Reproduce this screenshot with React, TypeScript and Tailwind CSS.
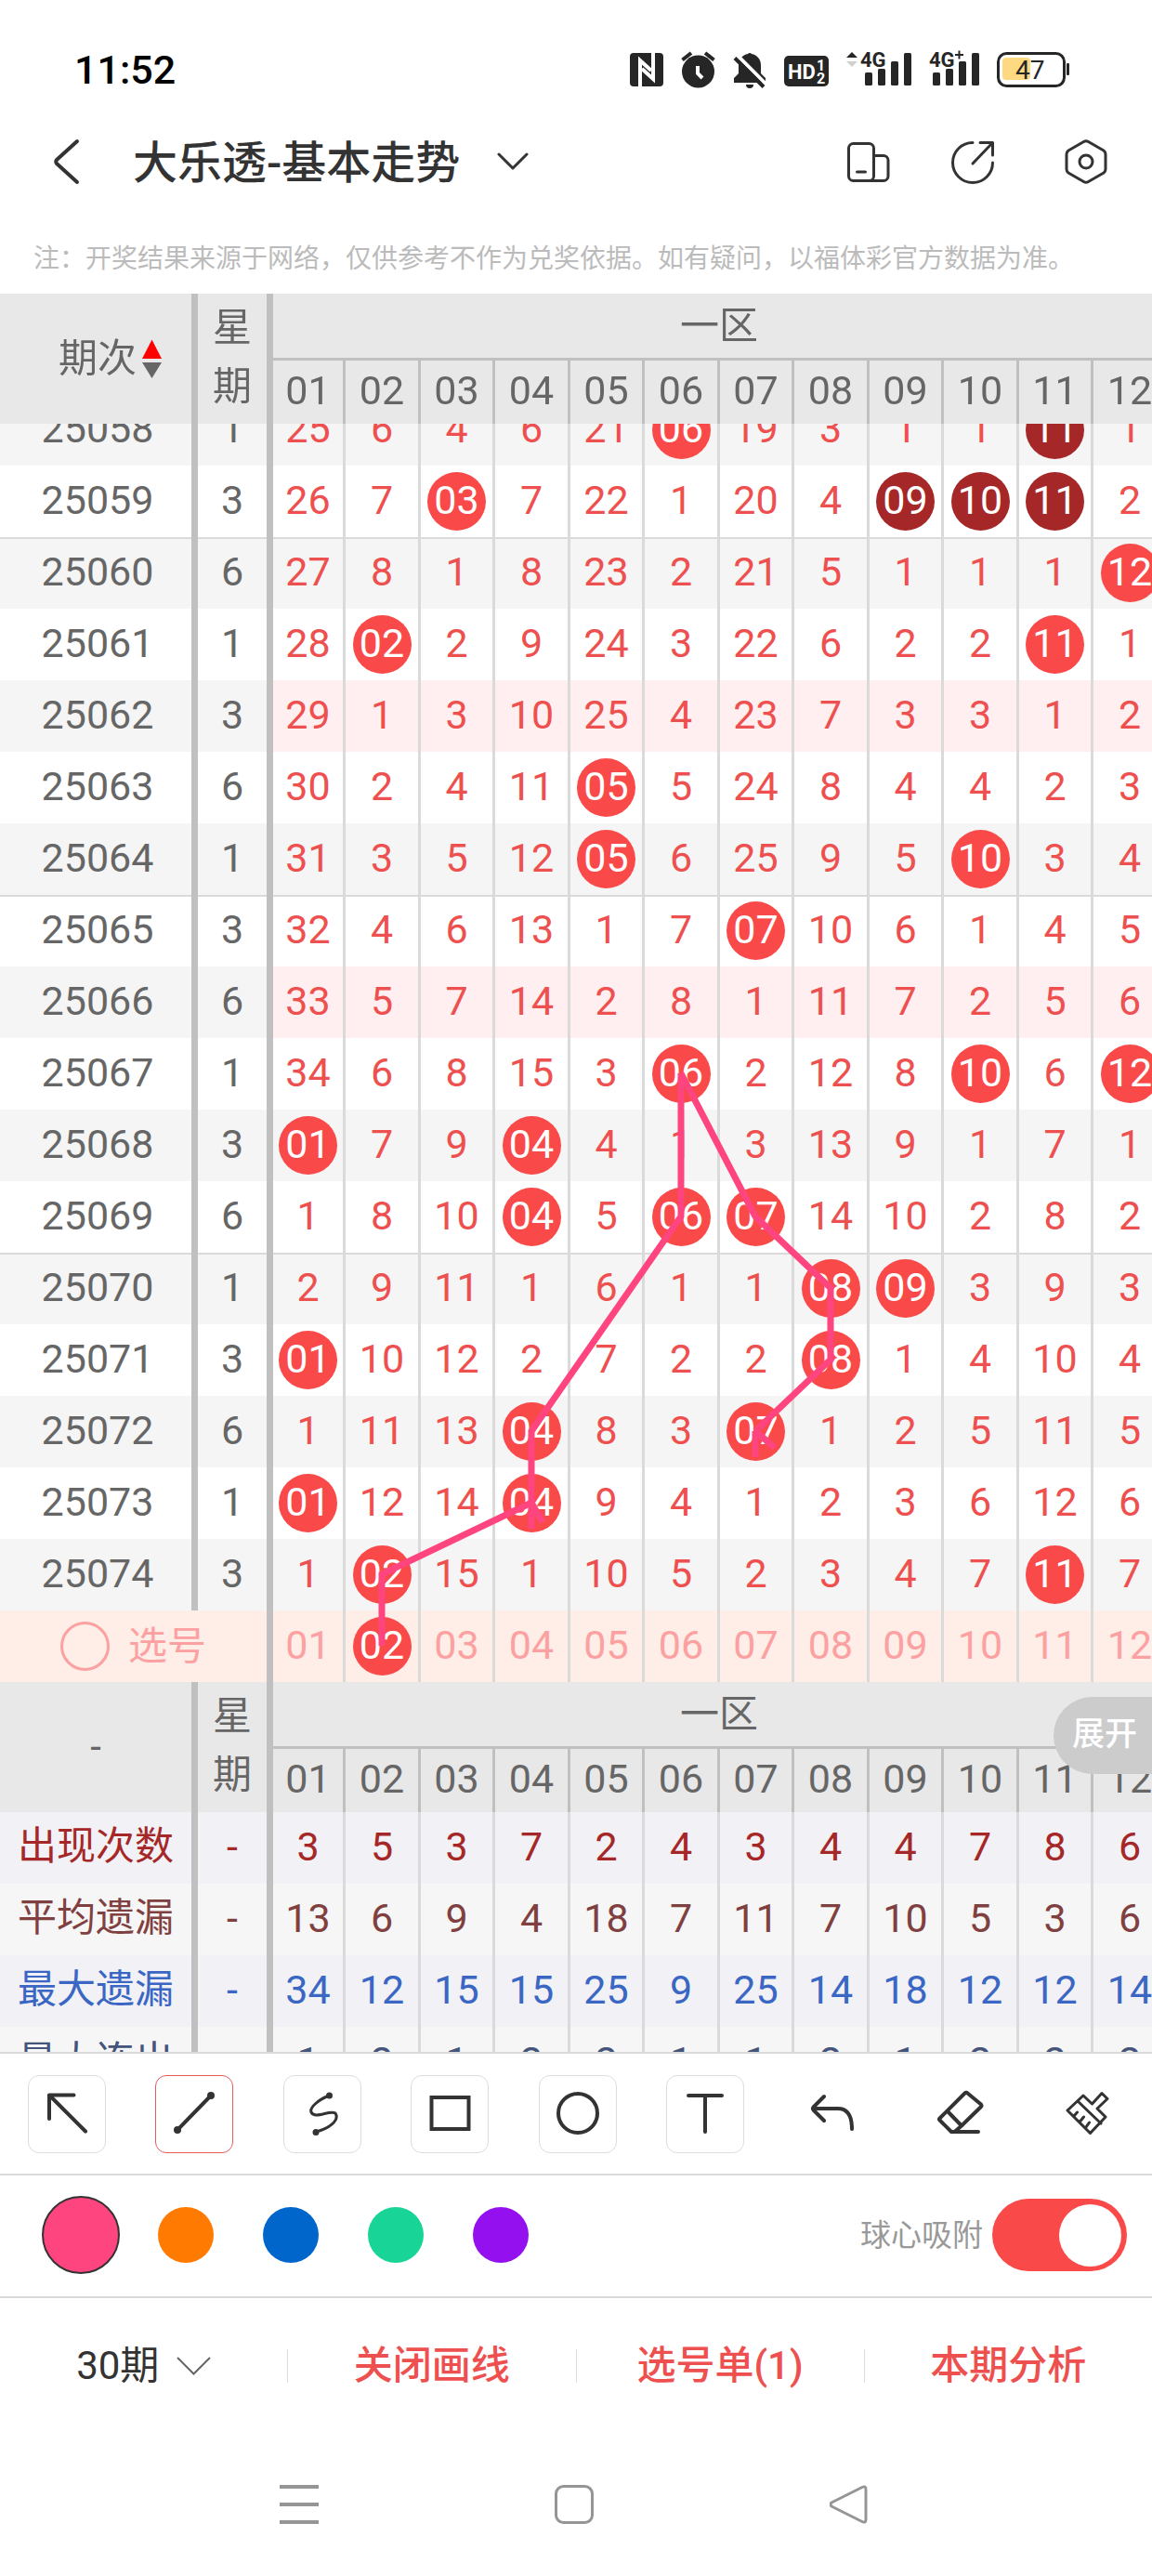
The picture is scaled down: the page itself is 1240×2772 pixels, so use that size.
import { useLayoutEffect, useRef, useState, type ReactNode } from "react";
import clsx from "clsx";

const NUMBERS = ["01", "02", "03", "04", "05", "06", "07", "08", "09", "10", "11", "12"];

const DRAWS = [
  { issue: "25058", week: "1", cells: "25 6 4 6 21 *06 19 3 1 1 !11 1" },
  { issue: "25059", week: "3", cells: "26 7 *03 7 22 1 20 4 !09 !10 !11 2" },
  { issue: "25060", week: "6", cells: "27 8 1 8 23 2 21 5 1 1 1 *12" },
  { issue: "25061", week: "1", cells: "28 *02 2 9 24 3 22 6 2 2 *11 1" },
  { issue: "25062", week: "3", cells: "29 1 3 10 25 4 23 7 3 3 1 2", pink: true },
  { issue: "25063", week: "6", cells: "30 2 4 11 *05 5 24 8 4 4 2 3" },
  { issue: "25064", week: "1", cells: "31 3 5 12 *05 6 25 9 5 *10 3 4" },
  { issue: "25065", week: "3", cells: "32 4 6 13 1 7 *07 10 6 1 4 5" },
  { issue: "25066", week: "6", cells: "33 5 7 14 2 8 1 11 7 2 5 6", pink: true },
  { issue: "25067", week: "1", cells: "34 6 8 15 3 *06 2 12 8 *10 6 *12" },
  { issue: "25068", week: "3", cells: "*01 7 9 *04 4 1 3 13 9 1 7 1" },
  { issue: "25069", week: "6", cells: "1 8 10 *04 5 *06 *07 14 10 2 8 2" },
  { issue: "25070", week: "1", cells: "2 9 11 1 6 1 1 *08 *09 3 9 3" },
  { issue: "25071", week: "3", cells: "*01 10 12 2 7 2 2 *08 1 4 10 4" },
  { issue: "25072", week: "6", cells: "1 11 13 *04 8 3 *07 1 2 5 11 5" },
  { issue: "25073", week: "1", cells: "*01 12 14 *04 9 4 1 2 3 6 12 6" },
  { issue: "25074", week: "3", cells: "1 *02 15 1 10 5 2 3 4 7 *11 7" },
];

const STATS = [
  { name: "出现次数", color: "text-[#a52727]", bg: "bg-[#f1f1f6]", cells: "3 5 3 7 2 4 3 4 4 7 8 6" },
  { name: "平均遗漏", color: "text-[#804040]", bg: "bg-[#f6f6f6]", cells: "13 6 9 4 18 7 11 7 10 5 3 6" },
  { name: "最大遗漏", color: "text-[#3a66c4]", bg: "bg-[#f1f1f6]", cells: "34 12 15 15 25 9 25 14 18 12 12 14" },
  { name: "最大连出", color: "text-[#44547a]", bg: "bg-[#f6f6f6]", cells: "1 2 1 2 2 1 1 2 1 2 2 2" },
];

const HEADER_HEIGHT = 140;
const ROW_HEIGHT = 77;

// [row, column] of every ball the two hand-drawn lines go through
const LINES = [
  [[17, 2], [16, 2], [15, 4], [14, 4], [11, 6], [9, 6]],
  [[9, 6], [11, 7], [12, 8], [13, 8], [14, 7]],
];

const pointX = (column: number) => 330 + Math.round((column - 1) * 80.5);
const pointY = (row: number) => HEADER_HEIGHT + row * ROW_HEIGHT + 38;

const BAR = "border-r-[7px] border-[#c0c0c0]";

const Cell = ({ value }: { value: string }) => {
  const mark = value[0];
  if (mark !== "*" && mark !== "!") return <span className="block pb-[3px]">{value}</span>;
  return (
    <span
      className={clsx(
        "mx-auto flex size-[63px] items-center justify-center rounded-full pb-[3px] text-white",
        mark === "*" ? "bg-[#fa4949]" : "bg-[#a52727]",
      )}
    >
      {value.slice(1)}
    </span>
  );
};

const HeaderRows = ({ first }: { first: ReactNode }) => (
  <>
    <tr className="h-[72px]">
      <th rowSpan={2} className={`${BAR} bg-[#e8e8e8] text-[42px] font-normal`}>
        {first}
      </th>
      <th rowSpan={2} className={`${BAR} bg-[#e8e8e8] px-4 pb-1 text-[42px] leading-[63px] font-normal`}>
        星
        <br />期
      </th>
      <th colSpan={12} className="border-b-3 border-[#c0c0c0] bg-[#e8e8e8] pr-1 text-[42px] font-normal">
        一区
      </th>
    </tr>
    <tr className="h-[68px]">
      {NUMBERS.map((n) => (
        <th key={n} className="border-r-3 border-[#c0c0c0] bg-[#e8e8e8] pb-1 font-normal">
          {n}
        </th>
      ))}
    </tr>
  </>
);

const TrendLines = () => (
  <svg className="pointer-events-none absolute top-0 left-0" width="1240" height="1580" fill="none" stroke="#ff457f" strokeWidth="7">
    {LINES.map((line, i) => (
      <polyline key={i} points={line.map(([r, c]) => `${pointX(c)},${pointY(r)}`).join(" ")} />
    ))}
    <path d={`M${pointX(4)} ${pointY(15)}v28M${pointX(4)} ${pointY(15)}l12 21`} />
    <path d={`M${pointX(7)} ${pointY(14)}v28M${pointX(7)} ${pointY(14)}l21 18`} />
  </svg>
);

const Chart = () => {
  const scroller = useRef<HTMLDivElement>(null);

  useLayoutEffect(() => {
    if (scroller.current) scroller.current.scrollTop = 32;
  }, []);

  return (
    <main className="relative min-h-0 flex-1">
      <div ref={scroller} className="h-full overflow-auto [scrollbar-width:none]">
        <div className="relative">
          <table className="w-[1258px] table-fixed border-separate border-spacing-0 text-center text-[43px] leading-none text-[#666]">
            <colgroup>
              <col className="w-[213px]" />
              <col className="w-[81px]" />
              {NUMBERS.map((n, i) => (
                <col key={n} className={i === 0 ? "w-[78px]" : i % 2 ? "w-[81px]" : "w-[80px]"} />
              ))}
            </colgroup>
            <thead className="sticky top-0 z-10">
              <HeaderRows
                first={
                  <button className="flex w-full items-center justify-end gap-1.5 pr-8">
                    期次
                    <svg width="21" height="42" viewBox="0 0 21 42">
                      <path d="M10.500 0.500L21 21H0z" fill="#f00" />
                      <path d="M0 25h21L10.500 42z" fill="#666" />
                    </svg>
                  </button>
                }
              />
            </thead>
            <tbody>
              {DRAWS.map((draw, i) => {
                const bg = i % 2 ? "bg-white" : "bg-[#f5f5f5]";
                const rule = i > 0 && i % 5 === 2 && "shadow-[inset_0_2px_0_#dadada]";
                return (
                  <tr key={draw.issue} className="h-[77px]">
                    <td className={clsx(BAR, bg, rule, "pb-[3px] pl-1")}>{draw.issue}</td>
                    <td className={clsx(BAR, bg, rule, "pb-[3px]")}>{draw.week}</td>
                    {draw.cells.split(" ").map((value, n) => (
                      <td
                        key={n}
                        className={clsx("border-r-3 border-[#dadada] text-[#ee4f4f]", draw.pink ? "bg-[#ffeff0]" : bg, rule)}
                      >
                        <Cell value={value} />
                      </td>
                    ))}
                  </tr>
                );
              })}
              <tr className="h-[77px] text-[#fba1a1]">
                <td colSpan={2} className={`${BAR} bg-[#ffede7] text-[42px]`}>
                  <button className="flex w-full items-center justify-center gap-5">
                    <span className="size-[53px] rounded-full border-3 border-[#fba1a1]" />
                    选号
                  </button>
                </td>
                {NUMBERS.map((n) => (
                  <td key={n} className="border-r-3 border-[#dadada] bg-[#ffede7]">
                    <button className="block w-full">
                      <Cell value={n === "02" ? "*02" : n} />
                    </button>
                  </td>
                ))}
              </tr>
              <HeaderRows first="-" />
              {STATS.map((stat) => (
                <tr key={stat.name} className={`h-[77px] ${stat.color}`}>
                  <td className={`${BAR} ${stat.bg} pb-[3px] text-[42px]`}>{stat.name}</td>
                  <td className={`${BAR} ${stat.bg} pb-[3px]`}>-</td>
                  {stat.cells.split(" ").map((value, n) => (
                    <td key={n} className={`border-r-3 border-[#dadada] ${stat.bg}`}>
                      <Cell value={value} />
                    </td>
                  ))}
                </tr>
              ))}
            </tbody>
          </table>
          <TrendLines />
        </div>
      </div>
      <button className="absolute right-0 bottom-[299px] z-20 h-[83px] rounded-l-full bg-[#ccc] pr-4 pl-5 text-[35px] font-medium text-white">
        展开
      </button>
    </main>
  );
};

const Signal = ({ children, bars }: { children: ReactNode; bars: number }) => (
  <svg width={bars + 50} height="40" viewBox={`0 0 ${bars + 50} 40`} className="overflow-visible" fill="#262626">
    {children}
    <rect x={bars} y="23" width="8" height="14" rx="1.500" />
    <rect x={bars + 14} y="19" width="8" height="18" rx="1.500" />
    <rect x={bars + 28} y="11" width="8" height="26" rx="1.500" />
    <rect x={bars + 42} y="2" width="8" height="35" rx="1.500" />
  </svg>
);

const StatusBar = () => (
  <div className="flex h-31 items-center justify-between pt-[26px] pr-22 pl-20">
    <span className="text-[43px] leading-none font-medium text-black">11:52</span>
    <div className="flex items-center gap-[19px]">
      <svg width="36" height="40" viewBox="0 0 36 40">
        <rect y="2" width="36" height="36" rx="4" fill="#262626" />
        <path d="M11 38V10l12 11M25 2v28L13 19" fill="none" stroke="#fff" strokeWidth="4" />
      </svg>
      <svg width="37" height="40" viewBox="0 0 37 40">
        <circle cx="18.500" cy="22" r="17.500" fill="#262626" />
        <path d="M1.500 9.500L11 2M35.500 9.500L26 2" stroke="#262626" strokeWidth="4" />
        <path d="M18 16v8l5 5" fill="none" stroke="#fff" strokeWidth="4" />
      </svg>
      <svg width="36" height="40" viewBox="0 0 36 40">
        <path d="M16 3a2.500 2.500 0 0 1 4 0c6 1 10 6 10 12v9l5 5v5H1v-5l5-5v-9C6 9 10 4 16 3z" fill="#262626" />
        <path d="M14 36h8a4 4 0 0 1-8 0z" fill="#262626" />
        <path d="M4.500 4.500L38 38" stroke="#fff" strokeWidth="4" />
        <path d="M2 7.500L33 38.500" stroke="#262626" strokeWidth="4" />
      </svg>
      <svg width="48" height="40" viewBox="0 0 48 40" fill="#fff" fontWeight="700">
        <rect y="5" width="48" height="33" rx="5" fill="#262626" />
        <text x="4" y="30" fontSize="22">HD</text>
        <text x="35" y="21" fontSize="16">1</text>
        <text x="35" y="35" fontSize="16">2</text>
      </svg>
      <Signal bars={20}>
        <path d="M0 7L6 1l6 6z" />
        <path d="M0 11h12l-6 6z" fill="#d0d0d0" />
        <text x="15" y="17" fontSize="22" fontWeight="700">4G</text>
      </Signal>
      <Signal bars={4}>
        <text x="0" y="17" fontSize="22" fontWeight="700">4G</text>
        <path d="M28 4h9M32.500-0.500v9" stroke="#262626" strokeWidth="2" />
      </Signal>
      <svg width="79" height="40" viewBox="0 0 79 40">
        <rect x="1.500" y="2.500" width="71" height="35" rx="9" fill="none" stroke="#262626" strokeWidth="3" />
        <rect x="6" y="7" width="30" height="24" rx="4" fill="#ffd982" />
        <rect x="75" y="13" width="3" height="13" rx="1" fill="#262626" />
        <text x="20" y="30" fontSize="28" fill="#262626">47</text>
      </svg>
    </div>
  </div>
);

const TitleBar = () => (
  <header className="flex h-25 items-center pr-[46px] pl-[57px] text-[#333]">
    <button aria-label="返回">
      <svg width="30" height="50" viewBox="0 0 30 50" fill="none" stroke="currentColor" strokeWidth="4" strokeLinecap="round" strokeLinejoin="round">
        <path d="M26 3L4 23q-1.500 2 0 4l22 20" />
      </svg>
    </button>
    <h1 className="ml-14 pt-1 text-[48px] leading-none font-medium">大乐透-基本走势</h1>
    <button aria-label="切换走势" className="ml-[39px]">
      <svg width="36" height="20" viewBox="0 0 36 20" fill="none" stroke="currentColor" strokeWidth="3" strokeLinecap="round" strokeLinejoin="round">
        <path d="M3 2l15 15L33 2" />
      </svg>
    </button>
    <div className="ml-auto flex items-center">
      <button aria-label="横屏">
        <svg width="48" height="50" viewBox="0 0 48 50" fill="none" stroke="currentColor" strokeWidth="3" strokeLinecap="round">
          <rect x="3.500" y="5.500" width="27" height="40" rx="5" />
          <path d="M30.500 18.500H41a5 5 0 0 1 5 5v17a5 5 0 0 1-5 5H26M12.500 36h9" />
        </svg>
      </button>
      <button aria-label="分享" className="ml-16">
        <svg width="50" height="50" viewBox="0 0 50 50" fill="none" stroke="currentColor" strokeWidth="3" strokeLinecap="round" strokeLinejoin="round">
          <path d="M25 4.500A21.500 21.500 0 1 0 46.500 26" />
          <path d="M33 4.500h13.500V18M46 5L25 27" />
        </svg>
      </button>
      <button aria-label="设置" className="ml-[72px]">
        <svg width="50" height="50" viewBox="0 0 50 50" fill="none" stroke="currentColor" strokeWidth="3" strokeLinejoin="round">
          <path d="M22.500 3.500q2.500-1.500 5 0L44 13q2 1.500 2 4v16q0 2.500-2 4l-16.500 9.500q-2.500 1.500-5 0L6 37q-2-1.500-2-4V17q0-2.500 2-4z" />
          <circle cx="25" cy="25" r="7" />
        </svg>
      </button>
    </div>
  </header>
);

const TOOLS = [
  {
    name: "箭头",
    icon: <path d="M49.500 21.500H23V47M23 21.500l39 39" />,
  },
  {
    name: "直线",
    icon: (
      <>
        <path d="M24 59l36-37" />
        <circle cx="60" cy="22" r="2" />
        <circle cx="24" cy="59" r="2" />
      </>
    ),
  },
  {
    name: "曲线",
    icon: (
      <>
        <path d="M49 22C37 27 28 35 30 40c4 8 20-3 26 1 5 8-8 17-21 20" strokeWidth="3" />
        <circle cx="49.500" cy="22" r="2" strokeWidth="3" />
        <circle cx="35" cy="61.500" r="2" strokeWidth="3" />
      </>
    ),
  },
  { name: "矩形", icon: <path d="M22.500 24h40v34h-40z" strokeLinejoin="miter" /> },
  { name: "圆形", icon: <circle cx="42" cy="41" r="21" /> },
  { name: "文字", icon: <path d="M24 22h36M42 22v39" /> },
  {
    name: "撤销",
    icon: <path d="M33 23L22 34q-2 2 0 4l11 11M21 36h27c11 0 15 9 15 22" />,
    plain: true,
  },
  {
    name: "橡皮擦",
    icon: (
      <path d="M46.500 19.500L19.500 46.500q-1 1 0 2L32 61l3.500 0L43 54.500 64 34q1-1 0-2.500L49.500 19.500q-1.500-1.500-3 0zM28 39l15 15.500M34 61h27" />
    ),
    plain: true,
  },
  {
    name: "清空",
    icon: (
      <path
        d="M37 22L20 38l24.500 24.500L61 45l-9-9 11-10.500-6-6L46.500 31zM31 28l25 24M27 44l3.500-4M33.500 50l4-5M40 56l3.500-5"
        strokeWidth="3"
      />
    ),
    plain: true,
  },
];

const Toolbar = () => {
  const [tool, setTool] = useState("直线");
  return (
    <div className="flex h-[131px] items-center justify-between border-t-2 border-[#dadada] pr-[27px] pl-[30px]">
      {TOOLS.map(({ name, icon, plain }) => (
        <button
          key={name}
          aria-label={name}
          onClick={() => !plain && setTool(name)}
          className={clsx(
            "size-[84px] rounded-xl",
            !plain && "border",
            tool === name ? "border-[#e65a5a]" : "border-[#ddd]",
          )}
        >
          <svg
            viewBox="0 0 84 84"
            className={clsx("size-[84px] text-[#333]", !plain && "-m-px")}
            fill="none"
            stroke="currentColor"
            strokeWidth="4"
            strokeLinecap="round"
            strokeLinejoin="round"
          >
            {icon}
          </svg>
        </button>
      ))}
    </div>
  );
};

const COLORS = [
  { name: "粉色", bg: "bg-[#ff457f]" },
  { name: "橙色", bg: "bg-[#ff7a00]" },
  { name: "蓝色", bg: "bg-[#0066cc]" },
  { name: "绿色", bg: "bg-[#18d496]" },
  { name: "紫色", bg: "bg-[#9410ee]" },
];

const ColorBar = () => (
  <div className="flex h-[132px] items-center border-t-2 border-[#dadada] pr-[27px] pb-0.5 pl-[45px]">
    <div className="flex items-center gap-[53px]">
      {COLORS.map(({ name, bg }, i) => (
        <input
          key={name}
          type="radio"
          name="color"
          aria-label={name}
          defaultChecked={i === 0}
          className={`size-[60px] appearance-none rounded-full border-[#333] checked:-mr-3 checked:size-[84px] checked:border-2 ${bg}`}
        />
      ))}
    </div>
    <label className="ml-auto flex items-center gap-2.5 text-[33px] leading-none text-[#999]">
      球心吸附
      <input type="checkbox" role="switch" defaultChecked className="peer sr-only" />
      <span className="flex h-[78px] w-[145px] items-center rounded-full bg-[#ccc] px-1.5 peer-checked:justify-end peer-checked:bg-[#fa4949]">
        <span className="size-[67px] rounded-full bg-white" />
      </span>
    </label>
  </div>
);

const ActionBar = () => (
  <div className="flex h-[147px] items-center border-t-2 border-[#dadada] text-[42px] leading-9 font-medium text-[#ee4f4f]">
    <div className="flex flex-1 items-center justify-center gap-[18px] font-normal text-[#333]">
      <select aria-label="期数" defaultValue="30" className="appearance-none leading-[48px]">
        <option value="30">30期</option>
        <option value="50">50期</option>
      </select>
      <svg width="37" height="20" viewBox="0 0 37 20" fill="none" stroke="#666" strokeWidth="2">
        <path d="M1 1l17.500 17.500L36 1" />
      </svg>
    </div>
    <button className="h-9 flex-1 border-l border-[#ddd]">关闭画线</button>
    <button className="h-9 flex-1 border-l border-[#ddd]">选号单(1)</button>
    <button className="h-9 flex-1 border-l border-[#ddd]">本期分析</button>
  </div>
);

const NavBar = () => (
  <nav className="flex h-[154px] items-center justify-center gap-[254px] pr-1 text-[#959595]">
    <button aria-label="最近任务">
      <svg width="42" height="42" viewBox="0 0 42 42" stroke="currentColor" strokeWidth="4">
        <path d="M0 2h42M0 21h42M0 40h42" />
      </svg>
    </button>
    <button aria-label="主屏幕">
      <svg width="42" height="42" viewBox="0 0 42 42" fill="none" stroke="currentColor" strokeWidth="3">
        <rect x="1.500" y="1.500" width="39" height="39" rx="8" />
      </svg>
    </button>
    <button aria-label="后退">
      <svg width="42" height="42" viewBox="0 0 42 42" fill="none" stroke="currentColor" strokeWidth="3" strokeLinejoin="round">
        <path d="M35 2.500q4-2 4 2.500v32q0 4.500-4 2.500L2 23q-2-2 0-4z" />
      </svg>
    </button>
  </nav>
);

export default function App() {
  return (
    <div className="flex h-screen flex-col overflow-hidden bg-white font-[Roboto,'Noto_Sans_CJK_SC',sans-serif]">
      <StatusBar />
      <TitleBar />
      <p className="h-[92px] shrink-0 truncate px-9 pt-[18px] text-[28px] leading-[74px] text-[#bbb]">
        注：开奖结果来源于网络，仅供参考不作为兑奖依据。如有疑问，以福体彩官方数据为准。
      </p>
      <Chart />
      <Toolbar />
      <ColorBar />
      <ActionBar />
      <NavBar />
    </div>
  );
}
